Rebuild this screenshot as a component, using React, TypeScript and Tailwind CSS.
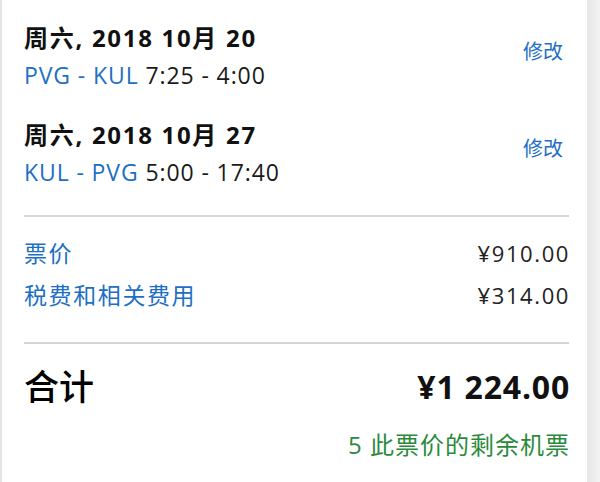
import React from 'react';

const font = { fontFamily: '"Open Sans", "Noto Sans CJK SC", sans-serif' };

interface Leg {
  date: string;
  route: string;
  time: string;
}

const legs: Leg[] = [
  { date: '周六, 2018 10月 20', route: 'PVG - KUL', time: '7:25 - 4:00' },
  { date: '周六, 2018 10月 27', route: 'KUL - PVG', time: '5:00 - 17:40' },
];

const fees = [
  { label: '票价', amount: '¥910.00' },
  { label: '税费和相关费用', amount: '¥314.00' },
];

const LegRow: React.FC<{ leg: Leg; first?: boolean }> = ({ leg, first }) => (
  <div className={`flex items-start justify-between ${first ? '' : 'mt-[32px]'}`}>
    <div>
      <div className="text-[24px] leading-[28px] font-bold tracking-[1.7px] text-[#111]">{leg.date}</div>
      <div className="mt-[9px] text-[23px] leading-[28px] tracking-[0.9px]">
        <span className="text-[#1d6fc4]">{leg.route}</span>{' '}
        <span className="text-[#1a1a1a]">{leg.time}</span>
      </div>
    </div>
    <button className="mt-[16px] mr-[6px] text-[20px] leading-[24px] text-[#1d6fc4]">修改</button>
  </div>
);

export default function App() {
  return (
    <div className="flex w-[600px] h-[482px] bg-white overflow-hidden" style={font}>
      <div className="w-[2px] bg-[#e4e4e4]" />
      <div className="flex-1 pl-[22px] pr-[18px] pt-[24px]">
        {legs.map((leg, i) => (
          <LegRow key={i} leg={leg} first={i === 0} />
        ))}

        <div className="mt-[29px] border-t-2 border-[#d6d6d6]" />

        {/* Fees */}
        <div className="mt-[22px] flex flex-col gap-[14px]">
          {fees.map((f) => (
            <div key={f.label} className="flex justify-between text-[22px] leading-[28px]">
              <span className="text-[#1d6fc4] text-[23px] tracking-[1.6px]">{f.label}</span>
              <span className="text-[#222] tracking-[1.6px] -mr-[1px]">{f.amount}</span>
            </div>
          ))}
        </div>

        <div className="mt-[33px] border-t-2 border-[#d6d6d6]" />

        {/* Total */}
        <div className="mt-[23px] flex items-center justify-between h-[40px]">
          <span className="text-[35px] font-medium text-black leading-[40px]">合计</span>
          <span className="text-[32px] font-bold text-[#111] leading-[40px] tracking-[0.8px] -mr-[1px]">¥1 224.00</span>
        </div>

        <div className="mt-[24px] text-right text-[24px] leading-[28px] tracking-[1px] text-[#2a8a3c] -mr-[1px]">5 此票价的剩余机票</div>
      </div>
      <div className="w-[13px] bg-gradient-to-r from-[#e6e6e6] to-[#f3f3f3]" />
    </div>
  );
}
